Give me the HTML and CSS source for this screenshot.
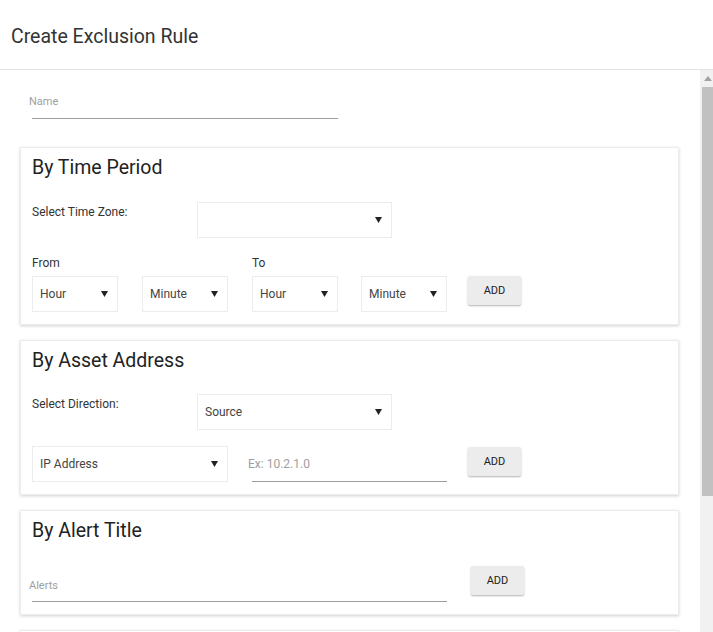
FILE: index.html
```html
<!DOCTYPE html>
<html>
<head>
<meta charset="utf-8">
<title>Create Exclusion Rule</title>
<link rel="stylesheet" href="styles.css">
</head>
<body>
<div class="app">
  <header class="header">Create Exclusion Rule</header>
  <div class="main">
    <div class="content">
      <div class="name-field">
        <div class="placeholder">Name</div>
      </div>

      <section class="card card-time">
        <h2 class="card-title">By Time Period</h2>
        <div class="label-row">
          <div class="label">Select Time Zone:</div>
          <div class="select select-wide"><span></span><svg class="arrow" width="7" height="6" viewBox="0 0 7 6"><polygon points="0,0 7,0 3.5,6"/></svg></div>
        </div>
        <div class="time-labels">
          <div class="label from">From</div>
          <div class="label to">To</div>
        </div>
        <div class="time-row">
          <div class="select select-sm"><span>Hour</span><svg class="arrow" width="7" height="6" viewBox="0 0 7 6"><polygon points="0,0 7,0 3.5,6"/></svg></div>
          <div class="select select-sm"><span>Minute</span><svg class="arrow" width="7" height="6" viewBox="0 0 7 6"><polygon points="0,0 7,0 3.5,6"/></svg></div>
          <div class="select select-sm"><span>Hour</span><svg class="arrow" width="7" height="6" viewBox="0 0 7 6"><polygon points="0,0 7,0 3.5,6"/></svg></div>
          <div class="select select-sm"><span>Minute</span><svg class="arrow" width="7" height="6" viewBox="0 0 7 6"><polygon points="0,0 7,0 3.5,6"/></svg></div>
          <button class="btn btn-time">ADD</button>
        </div>
      </section>

      <section class="card card-asset">
        <h2 class="card-title">By Asset Address</h2>
        <div class="label-row">
          <div class="label">Select Direction:</div>
          <div class="select select-wide"><span>Source</span><svg class="arrow" width="7" height="6" viewBox="0 0 7 6"><polygon points="0,0 7,0 3.5,6"/></svg></div>
        </div>
        <div class="asset-row">
          <div class="select select-ip"><span>IP Address</span><svg class="arrow" width="7" height="6" viewBox="0 0 7 6"><polygon points="0,0 7,0 3.5,6"/></svg></div>
          <div class="ip-input"><span class="ph">Ex: 10.2.1.0</span></div>
          <button class="btn btn-asset">ADD</button>
        </div>
      </section>

      <section class="card card-alert">
        <h2 class="card-title">By Alert Title</h2>
        <div class="alert-row">
          <div class="alert-input"><span class="placeholder">Alerts</span></div>
          <button class="btn btn-alert">ADD</button>
        </div>
      </section>

      <section class="card card-next"></section>
    </div>
    <div class="scrollbar">
      <div class="sb-up"><svg width="8" height="5" viewBox="0 0 8 5"><polygon points="0,5 8,5 4,0"/></svg></div>
      <div class="sb-thumb"></div>
    </div>
  </div>
</div>
</body>
</html>
```

FILE: styles.css
```css
* { box-sizing: border-box; }
html, body { margin: 0; padding: 0; background: #fff; }
body {
  font-family: Roboto, "Liberation Sans", Arial, sans-serif;
  color: #333;
  width: 713px;
  height: 632px;
  overflow: hidden;
}
.app { display: flex; flex-direction: column; height: 632px; }
.header {
  height: 70px;
  border-bottom: 1px solid #e3e3e3;
  padding: 25px 0 0 11px;
  font-size: 19.5px;
  line-height: 24px;
  color: #333;
  flex: none;
}
.main { flex: 1; display: flex; min-height: 0; }
.content {
  flex: 1;
  overflow: hidden;
  padding: 0 21px 0 20px;
}
.scrollbar {
  width: 13px;
  flex: none;
  background: #f1f1f1;
  display: flex;
  flex-direction: column;
  align-items: flex-end;
}
.sb-up {
  height: 17px;
  width: 11px;
  display: flex;
  justify-content: center;
  padding-top: 6px;
}
.sb-up svg { fill: #a3a3a3; }
.sb-thumb {
  width: 11px;
  height: 409px;
  background: #c1c1c1;
}

.placeholder { font-size: 11px; line-height: 13px; color: #9e9e9e; }
.name-field {
  width: 306px;
  margin: 25px 0 28px 12px;
  padding-bottom: 10px;
  border-bottom: 1px solid #9e9e9e;
}
.name-field .placeholder { margin-left: -3px; }

.card {
  background: #fff;
  border: 1px solid #ececec;
  box-shadow: 0 1px 3px rgba(0,0,0,0.18);
  padding: 8px 12px 12px 11px;
  margin-bottom: 15px;
}
.card-title {
  margin: 0;
  font-size: 19.5px;
  line-height: 24px;
  font-weight: 400;
  color: #222;
}
.label { font-size: 12px; line-height: 14px; color: #333; }
.label-row { display: flex; align-items: flex-start; }
.label-row .label { width: 165px; padding-top: 3px; }
.card-time .label-row { margin-top: 22px; }
.card-asset .label-row { margin-top: 21px; }

.select {
  height: 36px;
  border: 1px solid #ececec;
  display: flex;
  align-items: center;
  justify-content: space-between;
  padding: 0 9px 0 7px;
  font-size: 12px;
  color: #444;
  background: #fff;
}
.select .arrow { fill: #222; flex: none; }
.select-wide { width: 195px; }
.select-sm { width: 86px; }
.select-ip { width: 196px; }

.time-labels { display: flex; margin-top: 18px; height: 14px; }
.time-labels .from { width: 220px; }
.time-row { display: flex; align-items: flex-start; margin-top: 6px; gap: 24px; }
.time-row .select:nth-child(4) { margin-left: -1px; }

.btn {
  font-family: Roboto, "Liberation Sans", Arial, sans-serif;
  font-size: 11px;
  font-weight: 400;
  color: #222;
  background: #ececec;
  border: none;
  border-radius: 2px;
  box-shadow: 0 1px 2px rgba(0,0,0,0.3);
  width: 53px;
  height: 29px;
  padding: 0;
  flex: none;
}
.btn-time { margin-left: -3px; }

.asset-row { display: flex; align-items: flex-start; margin-top: 16px; }
.ip-input {
  width: 195px;
  height: 36px;
  margin-left: 24px;
  border-bottom: 1px solid #9e9e9e;
  display: flex;
  align-items: center;
  padding-left: 0;
}
.ip-input .ph { font-size: 12px; color: #9e9e9e; margin-left: -4px; }
.btn-asset { margin-left: 21px; margin-top: 1px; }

.alert-row { display: flex; align-items: flex-start; margin-top: 22px; }
.alert-input {
  width: 415px;
  height: 37px;
  border-bottom: 1px solid #9e9e9e;
  padding-top: 14px;
}
.alert-input .placeholder { margin-left: -3px; display: block; }
.btn-alert { margin-left: 24px; margin-top: 1px; }

.card-next { height: 40px; }
```
